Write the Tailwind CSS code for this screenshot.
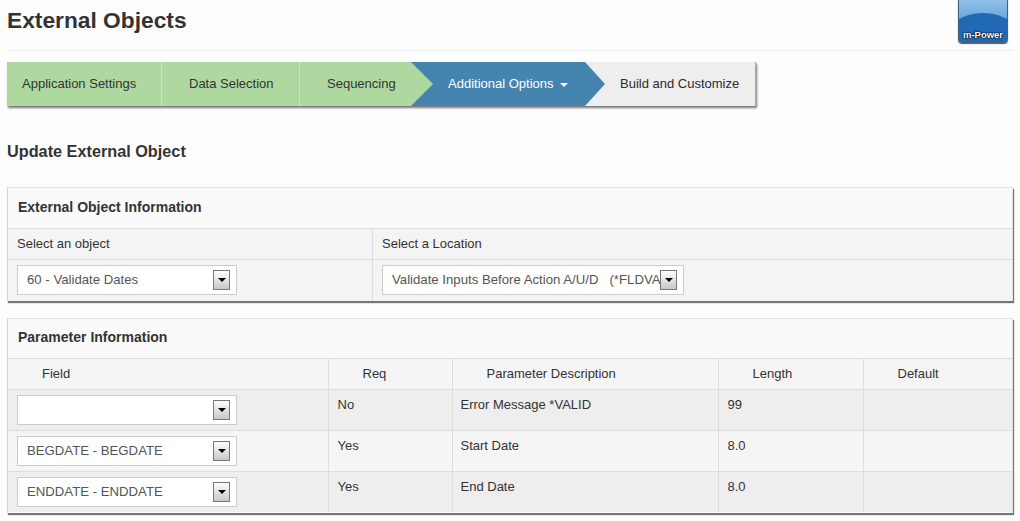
<!DOCTYPE html>
<html lang="en">
<head>
  <meta charset="UTF-8" />
  <title>External Objects</title>
  <script src="https://cdn.jsdelivr.net/npm/@tailwindcss/browser@4"></script>
</head>
<body class="bg-[#fdfdfd] text-[#333] font-['Liberation_Sans',Arial,sans-serif] text-[13px] h-[521px] w-[1020px] overflow-hidden">

  <main class="pl-[7px] pr-[7px]">

    <!-- Title -->
    <header class="h-[51px] border-b border-[#eeeeee] flex justify-between items-start">
      <h1 class="text-[22.75px] leading-[26px] font-bold mt-[7px] text-[#333]">External Objects</h1>
      <div class="relative w-[50px] h-[43px] mr-[5px] rounded-b-[4px] overflow-hidden bg-gradient-to-b from-[#8fbfe6] to-[#3f8ccb] shadow-[0_1px_1px_#555] border-x border-b border-[#4a5f72]">
        <div class="absolute left-[-16px] top-[13px] w-[80px] h-[60px] rounded-[50%] bg-[#2169b4]"></div>
        <div class="absolute inset-x-0 bottom-[1px] text-center text-[9.5px] leading-[12px] font-bold text-white whitespace-nowrap [text-shadow:0_0_2px_#000,0_0_1px_#000,0_0_1px_#000]">m-Power</div>
      </div>
    </header>

    <!-- Steps -->
    <nav class="flex w-[749px] h-[44px] mt-[11px] shadow-[1px_2px_2px_#777]">
      <div class="w-[155px] bg-[#aed8a0] border-r border-[#c8e6bd] pl-[15px] flex items-center">Application Settings</div>
      <div class="w-[138px] bg-[#aed8a0] border-r border-[#c8e6bd] pl-[27px] flex items-center">Data Selection</div>
      <div class="relative z-20 w-[133px] bg-[#aed8a0] pl-[27px] flex items-center [clip-path:polygon(0_0,111px_0,100%_50%,111px_100%,0_100%)]">Sequencing</div>
      <div class="relative z-10 ml-[-22px] w-[194px] bg-[#4584ae] text-white pl-[37px] flex items-center [clip-path:polygon(0_0,174px_0,100%_50%,174px_100%,0_100%)]">
        Additional Options
        <span class="ml-[6px] mt-[2px] border-x-[4px] border-t-[4px] border-x-transparent border-t-white"></span>
      </div>
      <div class="ml-[-22px] w-[173px] bg-[#eeeeee] pl-[37px] flex items-center border-r border-[#aaa] text-[#2b2b2b]">Build and Customize</div>
    </nav>

    <h2 class="text-[16.25px] leading-[20px] font-bold mt-[35px]">Update External Object</h2>

    <!-- External object panel -->
    <section class="mt-[26px] w-[1006px] h-[114px] border border-b-0 border-[#e2e2e2] border-l-[#d5d5d5] bg-[#fafafa] shadow-[1px_2px_1px_#777]">
      <h3 class="h-[41px] pl-[10px] font-bold text-[14px] leading-[38px] border-b border-[#dddddd]">External Object Information</h3>
      <div class="grid grid-cols-[365px_1fr] bg-[#f4f4f4]">
        <div class="h-[31px] pl-[9px] leading-[30px] border-r border-b border-[#dddddd]">Select an object</div>
        <div class="h-[31px] pl-[9px] leading-[30px] border-b border-[#dddddd]">Select a Location</div>
        <div class="h-[41px] pl-[9px] pt-[5px] border-r border-[#dddddd]">
          <div class="relative w-[220px] h-[30px] bg-white border border-[#cccccc] pl-[9px] leading-[28px] text-[13.2px] text-[#555]">60 - Validate Dates
            <span class="absolute right-[6px] top-[4px] w-[17px] h-[20px] border border-[#777] bg-gradient-to-b from-white to-[#c8c8c8] flex items-center justify-center"><span class="border-x-[4px] border-t-[4px] border-x-transparent border-t-black"></span></span>
          </div>
        </div>
        <div class="h-[41px] pl-[9px] pt-[5px]">
          <div class="relative w-[302px] h-[30px] bg-white border border-[#cccccc] pl-[9px] leading-[28px] text-[13.2px] text-[#555] whitespace-pre">Validate Inputs Before Action A/U/D   (*FLDVA<span class="absolute right-[6px] top-[4px] w-[17px] h-[20px] border border-[#777] bg-gradient-to-b from-white to-[#c8c8c8] flex items-center justify-center"><span class="border-x-[4px] border-t-[4px] border-x-transparent border-t-black"></span></span></div>
        </div>
      </div>
    </section>

    <!-- Parameter panel -->
    <section class="mt-[17px] w-[1006px] h-[195px] border border-b-0 border-[#e2e2e2] border-l-[#d5d5d5] bg-[#fafafa] shadow-[1px_2px_1px_#777]">
      <h3 class="h-[40px] pl-[10px] font-bold text-[14px] leading-[36px] border-b border-[#dddddd]">Parameter Information</h3>
      <table class="w-[1004px] table-fixed border-collapse">
        <colgroup>
          <col class="w-[320px]" /><col class="w-[124px]" /><col class="w-[266px]" /><col class="w-[145px]" /><col />
        </colgroup>
        <thead class="bg-[#f5f5f5]">
          <tr class="h-[30px] border-b border-[#dddddd]">
            <th class="font-normal text-left pl-[34px] border-r border-[#dddddd]">Field</th>
            <th class="font-normal text-left pl-[34px] border-r border-[#dddddd]">Req</th>
            <th class="font-normal text-left pl-[34px] border-r border-[#dddddd]">Parameter Description</th>
            <th class="font-normal text-left pl-[34px] border-r border-[#dddddd]">Length</th>
            <th class="font-normal text-left pl-[34px]">Default</th>
          </tr>
        </thead>
        <tbody>
          <tr class="h-[41px] bg-[#eeeeee] border-b border-[#dddddd] align-top">
            <td class="pl-[9px] pt-[5px] border-r border-[#dddddd]">
              <div class="relative w-[220px] h-[30px] bg-white border border-[#cccccc] pl-[9px] leading-[28px] text-[13.2px] text-[#555]">
                <span class="absolute right-[6px] top-[4px] w-[17px] h-[20px] border border-[#777] bg-gradient-to-b from-white to-[#c8c8c8] flex items-center justify-center"><span class="border-x-[4px] border-t-[4px] border-x-transparent border-t-black"></span></span>
              </div>
            </td>
            <td class="pl-[9px] pt-[5px] border-r border-[#dddddd]">No</td>
            <td class="pl-[8px] pt-[5px] border-r border-[#dddddd]">Error Message *VALID</td>
            <td class="pl-[9px] pt-[5px] border-r border-[#dddddd]">99</td>
            <td></td>
          </tr>
          <tr class="h-[41px] bg-[#f5f5f5] border-b border-[#dddddd] align-top">
            <td class="pl-[9px] pt-[5px] border-r border-[#dddddd]">
              <div class="relative w-[220px] h-[30px] bg-white border border-[#cccccc] pl-[9px] leading-[28px] text-[13.2px] text-[#555]">BEGDATE - BEGDATE
                <span class="absolute right-[6px] top-[4px] w-[17px] h-[20px] border border-[#777] bg-gradient-to-b from-white to-[#c8c8c8] flex items-center justify-center"><span class="border-x-[4px] border-t-[4px] border-x-transparent border-t-black"></span></span>
              </div>
            </td>
            <td class="pl-[9px] pt-[5px] border-r border-[#dddddd]">Yes</td>
            <td class="pl-[8px] pt-[5px] border-r border-[#dddddd]">Start Date</td>
            <td class="pl-[9px] pt-[5px] border-r border-[#dddddd]">8.0</td>
            <td></td>
          </tr>
          <tr class="h-[41px] bg-[#eeeeee] align-top">
            <td class="pl-[9px] pt-[5px] border-r border-[#dddddd]">
              <div class="relative w-[220px] h-[30px] bg-white border border-[#cccccc] pl-[9px] leading-[28px] text-[13.2px] text-[#555]">ENDDATE - ENDDATE
                <span class="absolute right-[6px] top-[4px] w-[17px] h-[20px] border border-[#777] bg-gradient-to-b from-white to-[#c8c8c8] flex items-center justify-center"><span class="border-x-[4px] border-t-[4px] border-x-transparent border-t-black"></span></span>
              </div>
            </td>
            <td class="pl-[9px] pt-[5px] border-r border-[#dddddd]">Yes</td>
            <td class="pl-[8px] pt-[5px] border-r border-[#dddddd]">End Date</td>
            <td class="pl-[9px] pt-[5px] border-r border-[#dddddd]">8.0</td>
            <td></td>
          </tr>
        </tbody>
      </table>
    </section>

  </main>
</body>
</html>
